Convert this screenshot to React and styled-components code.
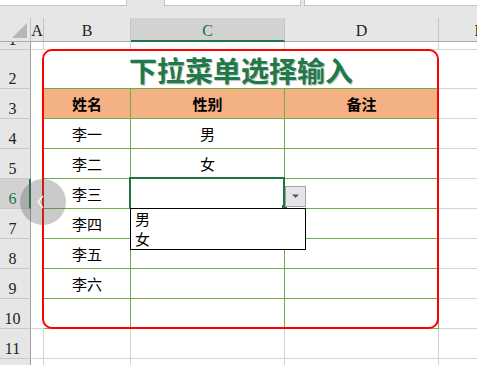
import React from 'react';
import styled, { createGlobalStyle } from 'styled-components';

const GRID = '#d4d4d4';
const GREEN = '#70ad47';
const HEAD = '#f4b183';
const XL = '#217346';

const Global = createGlobalStyle`
  html, body { margin: 0; padding: 0; background: #fff; overflow: hidden; }
  body { width: 477px; height: 365px; }
`;

const Page = styled.div`
  width: 477px;
  height: 365px;
  overflow: hidden;
  display: flex;
  flex-direction: column;
`;

const Strip = styled.div`
  height: 18px;
  flex-shrink: 0;
  background: #e6e6e6;
  display: flex;
  align-items: flex-start;
`;

const StripBox = styled.div`
  box-sizing: border-box;
  height: 6px;
  background: #fff;
  border: 1px solid #c3c3c3;
  border-top: none;
  ${p => p.$noLeft && 'border-left: none;'}
  ${p => p.$noRight && 'border-right: none;'}
  width: ${p => (p.$w ? `${p.$w}px` : 'auto')};
  margin-left: ${p => p.$ml || 0}px;
  flex: ${p => (p.$grow ? 1 : 'none')};
`;

const Sheet = styled.div`
  position: relative;
  display: grid;
  grid-template-columns: 31px 13px 87px 154px 154px 82px;
  grid-template-rows: 24px 8px 39px repeat(9, 30px) 30px;
  background: #fff;
`;

const Corner = styled.div`
  box-sizing: border-box;
  background: #e6e6e6;
  border-right: 1px solid #c3c3c3;
  border-bottom: 1px solid #ababab;
  position: relative;
`;

const ColHead = styled.div`
  box-sizing: border-box;
  background: ${p => (p.$sel ? '#d2d2d2' : '#e6e6e6')};
  border-right: 1px solid #c3c3c3;
  border-bottom: ${p => (p.$sel ? `2px solid ${XL}` : '1px solid #ababab')};
  display: flex;
  justify-content: center;
  align-items: center;
  padding-top: 3px;
  font-family: "Liberation Serif", serif;
  font-size: 16px;
  line-height: 18px;
  color: ${p => (p.$sel ? XL : '#222')};
  overflow: hidden;
  white-space: nowrap;
`;

const RowHead = styled.div`
  box-sizing: border-box;
  background: ${p => (p.$sel ? '#d2d2d2' : '#e6e6e6')};
  border-right: ${p => (p.$sel ? `2px solid ${XL}` : '1px solid #9f9f9f')};
  border-bottom: 1px solid #c8c8c8;
  display: flex;
  justify-content: center;
  align-items: flex-end;
  padding-right: ${p => (p.$sel ? 4 : 5)}px;
  font-family: "Liberation Serif", serif;
  font-size: 16px;
  line-height: 18px;
  color: ${p => (p.$sel ? XL : '#222')};
  overflow: hidden;
  white-space: nowrap;
`;

const Cell = styled.div`
  box-sizing: border-box;
  border-right: 1px solid ${p => p.$v || GRID};
  border-bottom: 1px solid ${p => p.$h || GRID};
  background: ${p => p.$bg || '#fff'};
  display: flex;
  align-items: center;
  justify-content: center;
  font-family: "Noto Sans CJK SC", sans-serif;
  font-size: 15px;
  font-weight: ${p => (p.$bold ? 700 : 400)};
  color: #000;
  overflow: hidden;
  white-space: nowrap;
  ${p => p.$span && `grid-column: span ${p.$span};`}
`;

const TitleCell = styled(Cell)`
  font-size: 28px;
  font-weight: 700;
  color: #1f7a4b;
  text-shadow: 1px 1px 1px rgba(0, 0, 0, 0.25);
  padding-top: 1px;
`;

const Frame = styled.div`
  position: absolute;
  left: 42px;
  top: 31px;
  width: 397px;
  height: 280px;
  box-sizing: border-box;
  border: 2px solid #ff0000;
  border-radius: 10px;
  pointer-events: none;
`;

const Selection = styled.div`
  position: absolute;
  left: 129px;
  top: 159px;
  width: 156px;
  height: 31px;
  box-sizing: border-box;
  border: 2px solid ${XL};
  border-bottom: none;
`;

const FillHandle = styled.div`
  position: absolute;
  left: 282px;
  top: 187px;
  width: 5px;
  height: 5px;
  background: ${XL};
`;

const DropButton = styled.div`
  position: absolute;
  left: 285px;
  top: 168px;
  width: 21px;
  height: 21px;
  box-sizing: border-box;
  background: #e4e5e8;
  border: 1px solid #a3a3a3;
  display: flex;
  align-items: center;
  justify-content: center;
`;

const List = styled.div`
  position: absolute;
  left: 130px;
  top: 190px;
  width: 176px;
  height: 42px;
  box-sizing: border-box;
  background: #fff;
  border: 1px solid #000;
  padding-left: 4px;
  z-index: 2;
`;

const ListItem = styled.div`
  font-family: "Noto Sans CJK SC", sans-serif;
  font-size: 15px;
  line-height: 20px;
  color: #000;
`;

const Knob = styled.div`
  position: absolute;
  left: 20px;
  top: 161px;
  width: 46px;
  height: 46px;
  border-radius: 50%;
  background: rgba(90, 90, 90, 0.32);
  z-index: 3;
`;

const KnobIcon = styled.svg`
  position: absolute;
  left: 0;
  top: 0;
`;

const CornerTri = styled.svg`
  position: absolute;
  left: 0;
  top: 0;
`;

const names = ['李一', '李二', '李三', '李四', '李五', '李六', ''];
const genders = ['男', '女', '', '', '', '', ''];

export default function App() {
  const rows = [];

  rows.push(
    <React.Fragment key="r1">
      <RowHead>1</RowHead>
      <Cell />
      <Cell />
      <Cell />
      <Cell />
      <Cell />
    </React.Fragment>
  );

  rows.push(
    <React.Fragment key="r2">
      <RowHead>2</RowHead>
      <Cell $h="#fff" $v="#fff" />
      <TitleCell $span={3} $h={GREEN} $v="#fff">下拉菜单选择输入</TitleCell>
      <Cell />
    </React.Fragment>
  );

  rows.push(
    <React.Fragment key="r3">
      <RowHead>3</RowHead>
      <Cell $h="#fff" $v="#fff" />
      <Cell $bg={HEAD} $h={GREEN} $v={GREEN} $bold>姓名</Cell>
      <Cell $bg={HEAD} $h={GREEN} $v={GREEN} $bold>性别</Cell>
      <Cell $bg={HEAD} $h={GREEN} $v={GREEN} $bold>备注</Cell>
      <Cell />
    </React.Fragment>
  );

  names.forEach((n, i) => {
    const num = i + 4;
    const lastTable = num === 10;
    rows.push(
      <React.Fragment key={`r${num}`}>
        <RowHead $sel={num === 6}>{num}</RowHead>
        <Cell $h={lastTable ? GRID : '#fff'} $v="#fff" />
        <Cell $h={GREEN} $v={GREEN}>{n}</Cell>
        <Cell $h={GREEN} $v={GREEN}>{genders[i]}</Cell>
        <Cell $h={GREEN} $v={GREEN} />
        <Cell />
      </React.Fragment>
    );
  });

  rows.push(
    <React.Fragment key="r11">
      <RowHead>11</RowHead>
      <Cell />
      <Cell />
      <Cell />
      <Cell />
      <Cell />
    </React.Fragment>
  );

  rows.push(
    <React.Fragment key="r12">
      <RowHead />
      <Cell />
      <Cell />
      <Cell />
      <Cell />
      <Cell />
    </React.Fragment>
  );

  return (
    <Page>
      <Global />
      <Strip>
        <StripBox $w={127} $noLeft />
        <StripBox $w={137} $ml={37} />
        <StripBox $ml={3} $grow $noRight />
      </Strip>
      <Sheet>
        <Corner>
          <CornerTri width="30" height="23" viewBox="0 0 30 23">
            <polygon points="27,5 27,20 12,20" fill="#b6b6b6" />
          </CornerTri>
        </Corner>
        <ColHead>A</ColHead>
        <ColHead>B</ColHead>
        <ColHead $sel>C</ColHead>
        <ColHead>D</ColHead>
        <ColHead>E</ColHead>
        {rows}
        <Frame />
        <Selection />
        <FillHandle />
        <DropButton>
          <svg width="19" height="19" viewBox="0 0 19 19">
            <polygon points="6,7.5 13,7.5 9.5,11" fill="#555" />
          </svg>
        </DropButton>
        <List>
          <ListItem>男</ListItem>
          <ListItem>女</ListItem>
        </List>
        <Knob>
          <KnobIcon width="46" height="46" viewBox="0 0 46 46">
            <polyline points="23,17 18,23 23,29" fill="none" stroke="rgba(255,255,255,0.85)" strokeWidth="1.5" />
          </KnobIcon>
        </Knob>
      </Sheet>
    </Page>
  );
}
